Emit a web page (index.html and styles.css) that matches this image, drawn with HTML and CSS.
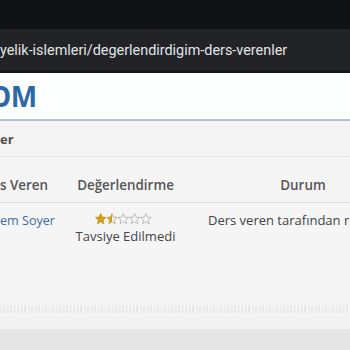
FILE: index.html
```html
<!DOCTYPE html>
<html lang="tr">
<head>
<meta charset="utf-8">
<link rel="stylesheet" href="styles.css">
</head>
<body>
<div class="topbar"></div>
<div class="urlbar"><span class="url">yelik-islemleri/degerlendirdigim-ders-verenler</span></div>
<div class="urlshadow"></div>
<header class="site-head"><span class="logo">OM</span></header>
<div class="crumb"><span class="crumb-title">er</span></div>
<main class="content">
  <div class="grid">
    <div class="th c1">s Veren</div>
    <div class="th c2">Değerlendirme</div>
    <div class="th c3">Durum</div>
    <div class="td c1"><a class="name" href="#">em Soyer</a></div>
    <div class="td c2">
      <div class="stars">
        <svg width="57" height="12" viewBox="0 0 57 12">
          <defs>
            <path id="st" d="M5.7 0.6 L7.2 4.1 L10.9 4.4 L8.1 6.9 L8.9 10.8 L5.7 8.7 L2.5 10.8 L3.3 6.9 L0.5 4.4 L4.2 4.1 Z"/>
            <clipPath id="half"><rect x="0" y="0" width="5.7" height="12"/></clipPath>
          </defs>
          <use href="#st" x="0" fill="#d99f12" stroke="#b98208" stroke-width="0.7"/>
          <use href="#st" x="11.3" fill="none" stroke="#b59650" stroke-width="0.7"/>
          <g transform="translate(11.3 0)"><use href="#st" fill="#d99f12" clip-path="url(#half)"/></g>
          <use href="#st" x="22.6" fill="none" stroke="#a9a9a9" stroke-width="0.75"/>
          <use href="#st" x="33.9" fill="none" stroke="#a9a9a9" stroke-width="0.75"/>
          <use href="#st" x="45.2" fill="none" stroke="#a9a9a9" stroke-width="0.75"/>
        </svg>
      </div>
      <div class="verdict">Tavsiye Edilmedi</div>
    </div>
    <div class="td c3 status">Ders veren tarafından re</div>
  </div>
</main>
<div class="scrollband"></div>
<div class="band-light"></div>
<div class="footer"></div>
</body>
</html>
```

FILE: styles.css
```css
html, body {
  margin: 0;
  padding: 0;
  width: 350px;
  height: 350px;
  overflow: hidden;
  background: #f4f4f4;
  font-family: "Open Sans", "Noto Sans", sans-serif;
}
.topbar {
  height: 29px;
  background: #111216;
}
.urlbar {
  height: 41px;
  background: #222327;
  display: flex;
  align-items: center;
}
.url {
  font-family: Roboto, "Noto Sans", sans-serif;
  font-size: 14.4px;
  color: #e3e3e5;
  white-space: nowrap;
  padding-top: 1px;
}
.urlshadow {
  height: 3px;
  background: #16171a;
}
.site-head {
  height: 46px;
  background: #fdfefe;
  border-bottom: 2px solid #b5c1ce;
  display: flex;
  align-items: center;
  overflow: hidden;
}
.logo {
  font-size: 28px;
  font-weight: 700;
  color: #2c68a5;
  letter-spacing: -0.5px;
  margin-left: -11px;
  line-height: 1;
}
.crumb {
  height: 35px;
  background: #f4f4f5;
  border-bottom: 1px solid #e6e6e6;
  box-shadow: 0 1px 0 #ffffff;
  display: flex;
  align-items: center;
}
.crumb-title {
  font-size: 13px;
  font-weight: 700;
  color: #505050;
  padding-top: 1px;
}
.content {
  height: 148px;
  background: #f5f5f5;
  overflow: hidden;
}
.grid {
  display: grid;
  grid-template-columns: 60px 131px 224px;
  width: 415px;
}
.th {
  font-size: 13.4px;
  font-weight: 600;
  color: #555555;
  padding: 19px 0 7px;
  border-bottom: 1px solid #dedede;
  line-height: 19px;
  white-space: nowrap;
}
.td {
  font-size: 13px;
  color: #444444;
  padding-top: 8px;
  line-height: 19px;
  white-space: nowrap;
}
.c1 { text-align: left; }
.c2 { text-align: center; }
.c3 { text-align: center; }
.status {
  text-align: left;
  padding-left: 17px;
  font-size: 13px;
}
.name {
  color: #3b6fa3;
  text-decoration: none;
  font-size: 12.6px;
}
.stars {
  height: 16px;
  display: flex;
  justify-content: center;
  align-items: center;
  padding-right: 5px;
}
.stars svg { display: block; }
.verdict {
  line-height: 19px;
}
.scrollband {
  height: 8px;
  background: repeating-linear-gradient(90deg, #ececec 0 2px, #f6f6f6 2px 3px, #e9e9e9 3px 5px, #f3f3f3 5px 7px);
}
.band-light {
  height: 16px;
  background: #f3f3f3;
}
.footer {
  height: 40px;
  background: #e5e5e5;
}
```
